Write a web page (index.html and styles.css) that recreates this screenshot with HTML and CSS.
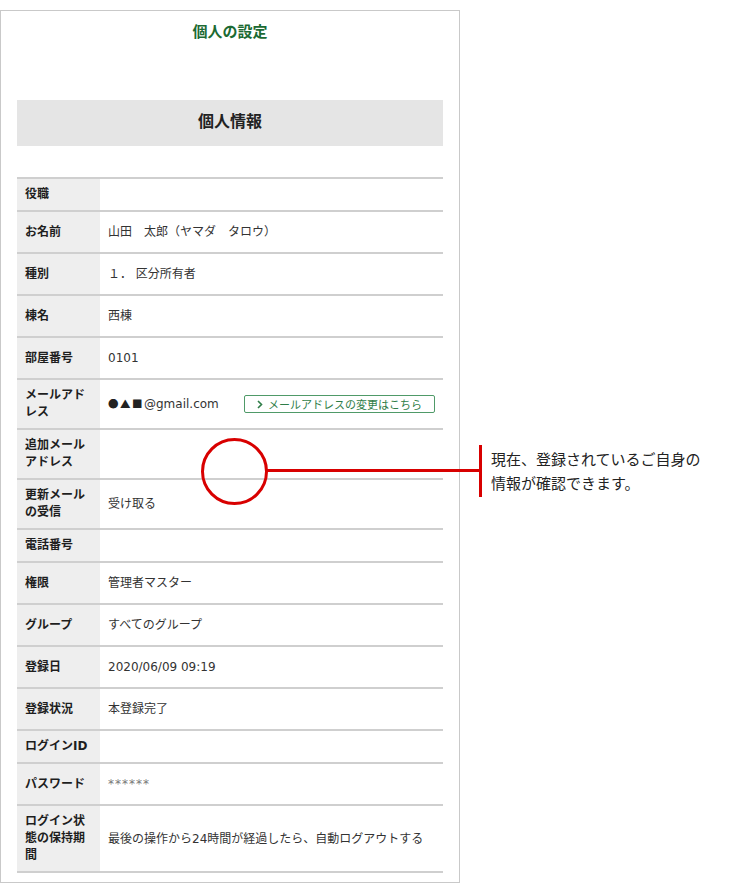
FILE: index.html
```html
<!DOCTYPE html>
<html lang="ja">
<head>
<meta charset="utf-8">
<title>個人の設定</title>
<link rel="stylesheet" href="styles.css">
</head>
<body>
<div class="page">
  <div class="frame">
    <h1 class="title">個人の設定</h1>
    <h2 class="section">個人情報</h2>
    <table class="info">
      <colgroup><col class="col-label"><col></colgroup>
      <tr><th>役職</th><td class="empty"></td></tr>
      <tr><th>お名前</th><td>山田　太郎（ヤマダ　タロウ）</td></tr>
      <tr><th>種別</th><td>１． 区分所有者</td></tr>
      <tr><th>棟名</th><td>西棟</td></tr>
      <tr><th>部屋番号</th><td>0101</td></tr>
      <tr><th>メールアドレス</th><td class="mail-cell">
        <div class="mail-row">
          <span class="mail"><span class="marks">●▲■</span>@gmail.com</span>
          <a class="change-btn" href="#">
            <svg class="chev" width="6" height="9" viewBox="0 0 6 9"><polyline points="1,1 4.5,4.5 1,8" fill="none" stroke="currentColor" stroke-width="1.6"/></svg>
            <span>メールアドレスの変更はこちら</span>
          </a>
        </div>
      </td></tr>
      <tr><th>追加メールアドレス</th><td></td></tr>
      <tr><th>更新メールの受信</th><td>受け取る</td></tr>
      <tr><th>電話番号</th><td class="empty"></td></tr>
      <tr><th>権限</th><td>管理者マスター</td></tr>
      <tr><th>グループ</th><td>すべてのグループ</td></tr>
      <tr><th>登録日</th><td>2020/06/09 09:19</td></tr>
      <tr><th>登録状況</th><td>本登録完了</td></tr>
      <tr><th>ログインID</th><td class="empty"></td></tr>
      <tr><th>パスワード</th><td class="pw">******</td></tr>
      <tr><th>ログイン状態の保持期間</th><td>最後の操作から24時間が経過したら、自動ログアウトする</td></tr>
    </table>
  </div>

  <div class="mark-circle"></div>
  <div class="mark-line"></div>
  <div class="mark-bar"></div>
  <p class="note">現在、登録されているご自身の<br>情報が確認できます。</p>
</div>
</body>
</html>
```

FILE: styles.css
```css
html, body {
  margin: 0;
  padding: 0;
  background: #ffffff;
}

body {
  font-family: "DejaVu Sans", "Noto Sans CJK JP", sans-serif;
  color: #333333;
}

.page {
  position: relative;
  width: 750px;
  height: 893px;
  overflow: hidden;
}

.frame {
  margin-top: 10px;
  width: 426px;
  padding: 0 16px 9px;
  border: 1px solid #c9c9c9;
  background: #ffffff;
}

.title {
  margin: 0;
  padding-top: 9px;
  height: 22px;
  line-height: 22px;
  font-family: "Noto Sans CJK JP", sans-serif;
  font-size: 15px;
  font-weight: bold;
  color: #1c6a33;
  text-align: center;
}

.section {
  margin: 58px 0 0;
  height: 40px;
  padding-bottom: 6px;
  line-height: 40px;
  background: #e5e5e5;
  font-family: "Noto Sans CJK JP", sans-serif;
  font-size: 16px;
  font-weight: bold;
  color: #222222;
  text-align: center;
}

.info {
  margin-top: 31px;
  width: 426px;
  border-collapse: collapse;
  table-layout: fixed;
}

.col-label {
  width: 83px;
}

.info th,
.info td {
  border-top: 2px solid #cfcfcf;
  vertical-align: middle;
  text-align: left;
}

.info tr:last-child th,
.info tr:last-child td {
  border-bottom: 2px solid #cfcfcf;
}

.info th {
  background: #eeeeee;
  padding: 7px 8px;
  font-size: 12px;
  line-height: 17px;
  font-weight: bold;
  color: #1e1e1e;
}

.info td {
  padding: 11px 8px;
  font-size: 12px;
  line-height: 18px;
  color: #333333;
}

.info td.empty {
  padding-top: 7px;
  padding-bottom: 7px;
  line-height: 17px;
}

.info td.pw {
  color: #777777;
  letter-spacing: 1px;
}

.mail-row {
  display: flex;
  align-items: center;
  justify-content: space-between;
}

.marks {
  font-family: "Noto Sans CJK JP", sans-serif;
  font-size: 10.5px;
  letter-spacing: 1.5px;
  color: #222222;
}

.change-btn {
  display: flex;
  align-items: center;
  gap: 5px;
  height: 16px;
  padding: 0 12px 0 12px;
  border: 1px solid #4f9a68;
  border-radius: 2px;
  font-family: "Noto Sans CJK JP", sans-serif;
  font-size: 11px;
  line-height: 16px;
  color: #2f7d48;
  text-decoration: none;
}

.chev {
  display: block;
}

.mark-circle {
  position: absolute;
  left: 201px;
  top: 438px;
  width: 61px;
  height: 61px;
  border: 3px solid #d80000;
  border-radius: 50%;
}

.mark-line {
  position: absolute;
  left: 267px;
  top: 469px;
  width: 213px;
  height: 3px;
  background: #d80000;
}

.mark-bar {
  position: absolute;
  left: 479px;
  top: 445px;
  width: 3px;
  height: 52px;
  background: #d80000;
}

.note {
  position: absolute;
  left: 491px;
  top: 447px;
  margin: 0;
  font-family: "Noto Sans CJK JP", sans-serif;
  font-size: 15px;
  line-height: 24px;
  color: #222222;
  white-space: nowrap;
}
```
